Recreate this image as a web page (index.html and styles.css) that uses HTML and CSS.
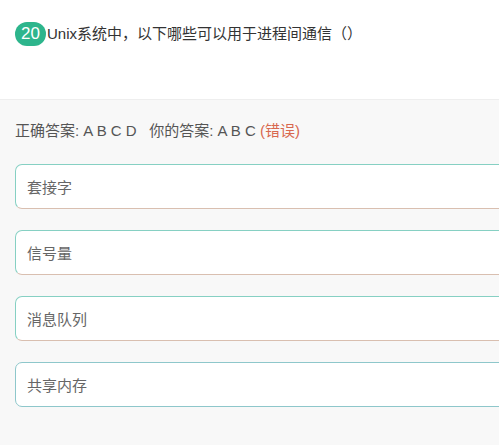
FILE: index.html
```html
<!DOCTYPE html>
<html>
<head>
<meta charset="utf-8">
<link rel="stylesheet" href="styles.css">
</head>
<body>
<div class="question">
  <span class="badge">20</span><span class="qtext">Unix系统中，以下哪些可以用于进程间通信（）</span>
</div>
<div class="answers">
  <div class="result">正确答案: A B C D&nbsp;&nbsp;&nbsp;你的答案: A B C <span class="wrong">(错误)</span></div>
  <div class="option warm">套接字</div>
  <div class="option warm">信号量</div>
  <div class="option warm">消息队列</div>
  <div class="option cool">共享内存</div>
</div>
</body>
</html>
```

FILE: styles.css
```css
html, body {
  margin: 0;
  padding: 0;
  background: #f8f8f8;
  font-family: "Noto Sans CJK SC", "Liberation Sans", sans-serif;
  overflow: hidden;
}
.question {
  background: #fff;
  height: 100px;
  border-bottom: 1px solid #eeeeee;
  padding: 22px 0 0 15px;
  box-sizing: border-box;
  display: flex;
  align-items: flex-start;
}
.badge {
  display: inline-flex;
  align-items: center;
  justify-content: center;
  width: 31px;
  height: 24px;
  border-radius: 12px;
  background: #2db58c;
  color: #fff;
  font-family: "Liberation Sans", sans-serif;
  font-size: 17px;
  line-height: 24px;
}
.qtext {
  margin-left: 1px;
  font-size: 15px;
  line-height: 24px;
  color: #333;
  font-family: "Liberation Sans", "Noto Sans CJK SC", sans-serif;
}
.answers {
  padding: 20px 0 0 15px;
  display: flex;
  flex-direction: column;
}
.result {
  font-size: 15px;
  line-height: 22px;
  color: #555;
  font-family: "Liberation Sans", "Noto Sans CJK SC", sans-serif;
  margin-bottom: 22px;
}
.wrong {
  color: #d8684f;
}
.option {
  height: 45px;
  box-sizing: border-box;
  width: 500px;
  margin-bottom: 21px;
  background: #fff;
  border-radius: 7px;
  border: 1.5px solid #86d0c3;
  padding-left: 11px;
  display: flex;
  align-items: center;
  font-size: 15px;
  color: #666;
}
.option.warm {
  border-bottom-color: #d9bfb0;
}
.option.cool {
  border-color: #8ec7cb;
}
```
